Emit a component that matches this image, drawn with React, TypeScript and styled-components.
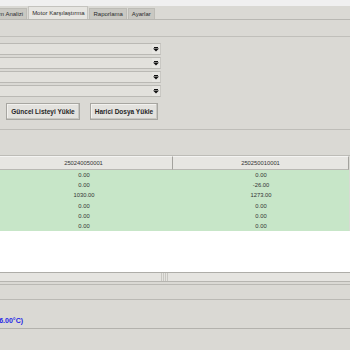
import React from 'react';
import styled, { createGlobalStyle } from 'styled-components';

const GlobalStyle = createGlobalStyle`
  html, body {
    margin: 0;
    padding: 0;
  }
  body {
    width: 350px;
    height: 350px;
    overflow: hidden;
    background: #dad9d4;
    font-family: "Liberation Sans", Arial, sans-serif;
  }
`;

const Window = styled.div`
  width: 350px;
  height: 350px;
  overflow: hidden;
  display: flex;
  flex-direction: column;
  background: #dad9d4;
`;

const TopStrip = styled.div`
  height: 6px;
  flex-shrink: 0;
  background: #f0f0f0;
`;

const TabBar = styled.div`
  height: 13px;
  flex-shrink: 0;
  display: flex;
  align-items: flex-end;
  gap: 1px;
  overflow: hidden;
`;

const Tab = styled.div<{ $active?: boolean; $offset?: number }>`
  height: ${p => (p.$active ? 13 : 11)}px;
  margin-left: ${p => p.$offset ?? 0}px;
  padding: 0 3px;
  display: flex;
  align-items: center;
  font-size: 6px;
  white-space: nowrap;
  color: #2b2b2b;
  background: ${p => (p.$active ? '#e6e5e1' : '#c9c8c2')};
  border: 1px solid ${p => (p.$active ? '#c4c3be' : '#bdbcb6')};
  border-bottom: none;
  box-sizing: border-box;
`;

const TabPage = styled.div`
  flex: 1;
  display: flex;
  flex-direction: column;
  border-top: 1px solid #b8b7b2;
`;

const TopBand = styled.div`
  height: 16px;
  flex-shrink: 0;
`;

const GroupBox = styled.div`
  flex-shrink: 0;
  border-top: 1px solid #c0bfba;
  border-bottom: 1px solid #bebdb8;
  padding: 6px 0 9px 0;
  display: flex;
  flex-direction: column;
`;

const ComboList = styled.div`
  display: flex;
  flex-direction: column;
  gap: 2px;
`;

const Combo = styled.div`
  width: 163px;
  height: 12px;
  margin-left: -2px;
  box-sizing: border-box;
  display: flex;
  justify-content: flex-end;
  background: #e2e1dc;
  border: 1px solid #bab9b4;
  border-right-color: #c9c8c3;
`;

const ComboArrow = styled.div`
  width: 8px;
  display: flex;
  align-items: center;
  justify-content: center;
  background: #e7e6e2;
`;

const ButtonRow = styled.div`
  margin-top: 6px;
  padding-left: 6px;
  display: flex;
  gap: 10px;
`;

const Button = styled.div<{ $width: number }>`
  width: ${p => p.$width}px;
  height: 17px;
  box-sizing: border-box;
  display: flex;
  align-items: center;
  justify-content: center;
  font-size: 6.5px;
  font-weight: bold;
  color: #262626;
  background: #e3e2de;
  border: 1px solid #a7a6a1;
  box-shadow: inset -1px -1px 0 #c8c7c2, inset 1px 1px 0 #f2f1ee;
`;

const EmptyBand = styled.div`
  height: 25px;
  flex-shrink: 0;
  border-bottom: 1px solid #bdbcb7;
`;

const Grid = styled.div`
  flex-shrink: 0;
  margin-left: -5px;
  display: grid;
  grid-template-columns: 178px 176px;
  font-size: 5.8px;
  color: #333;
`;

const HeaderCell = styled.div`
  height: 14px;
  box-sizing: border-box;
  display: flex;
  align-items: center;
  justify-content: center;
  background: #e7e6e2;
  border-top: 1px solid #f4f4f2;
  border-right: 1px solid #a3a29d;
  border-bottom: 1px solid #b9b8b3;
`;

const DataCell = styled.div`
  height: 10.2px;
  display: flex;
  align-items: center;
  justify-content: center;
  background: #c7e6c8;
`;

const WhiteArea = styled.div`
  height: 41px;
  flex-shrink: 0;
  background: #ffffff;
`;

const ScrollBar = styled.div`
  height: 8px;
  flex-shrink: 0;
  display: flex;
  align-items: stretch;
  background: #e5e4e0;
  border-top: 1px solid #aeada8;
  border-bottom: 1px solid #b6b5b0;
`;

const Grip = styled.div`
  margin-left: 161px;
  width: 7px;
  background: repeating-linear-gradient(90deg, #c8c7c2 0 1px, #e5e4e0 1px 2px);
`;

const Spacer = styled.div<{ $h: number }>`
  height: ${p => p.$h}px;
  flex-shrink: 0;
  border-bottom: 1px solid #bab9b4;
`;

const StatusRow = styled.div`
  height: 29px;
  flex-shrink: 0;
  display: flex;
  align-items: flex-end;
  padding-bottom: 4px;
  box-sizing: border-box;
  border-bottom: 1px solid #b3b2ad;
`;

const StatusText = styled.span`
  margin-left: -7px;
  font-size: 7px;
  font-weight: bold;
  color: #2424e6;
  white-space: nowrap;
`;

const Arrow = () => (
  <svg width="6" height="5" viewBox="0 0 6 5">
    <rect x="1" y="0" width="4" height="1" fill="#111" />
    <polygon points="0,1.5 6,1.5 3,4.5" fill="#111" />
  </svg>
);

const columns = ['250240050001', '250250010001'];
const rows = [
  ['0.00', '0.00'],
  ['0.00', '-26.00'],
  ['1030.00', '1273.00'],
  ['0.00', '0.00'],
  ['0.00', '0.00'],
  ['0.00', '0.00'],
];

const App: React.FC = () => {
  return (
    <>
      <GlobalStyle />
      <Window>
        <TopStrip />
        <TabBar>
          <Tab $offset={-21}>Titreşim Analizi</Tab>
          <Tab $active>Motor Karşılaştırma</Tab>
          <Tab>Raporlama</Tab>
          <Tab>Ayarlar</Tab>
        </TabBar>
        <TabPage>
          <TopBand />
          <GroupBox>
            <ComboList>
              {[0, 1, 2, 3].map(i => (
                <Combo key={i}>
                  <ComboArrow>
                    <Arrow />
                  </ComboArrow>
                </Combo>
              ))}
            </ComboList>
            <ButtonRow>
              <Button $width={74}>Güncel Listeyi Yükle</Button>
              <Button $width={68}>Harici Dosya Yükle</Button>
            </ButtonRow>
          </GroupBox>
          <EmptyBand />
          <Grid>
            {columns.map(c => (
              <HeaderCell key={c}>{c}</HeaderCell>
            ))}
            {rows.map((r, i) =>
              r.map((v, j) => <DataCell key={i + '-' + j}>{v}</DataCell>)
            )}
          </Grid>
          <WhiteArea />
          <ScrollBar>
            <Grip />
          </ScrollBar>
          <Spacer $h={2} />
          <Spacer $h={14} />
          <StatusRow>
            <StatusText>(96.00°C)</StatusText>
          </StatusRow>
        </TabPage>
      </Window>
    </>
  );
};

export default App;
